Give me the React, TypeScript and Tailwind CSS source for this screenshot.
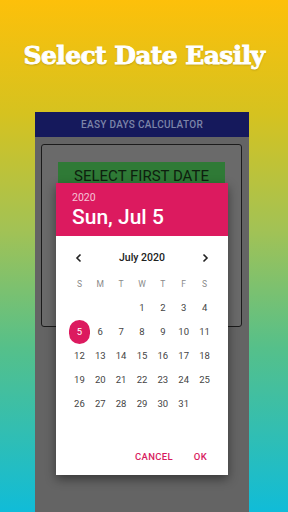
import React from "react"

const weekdays = ["S", "M", "T", "W", "T", "F", "S"]

// July 2020 starts on a Wednesday
const days: (number | null)[] = [null, null, null, ...Array.from({length: 31}, (_, i) => i + 1)]

function Chevron({dir}: {dir: "left" | "right"}) {
    return (
        <svg width="10" height="10" viewBox="0 0 10 10" className="text-[#222]">
            <path
                d={dir === "left" ? "M6.5 1.5 L3 5 L6.5 8.5" : "M3.5 1.5 L7 5 L3.5 8.5"}
                fill="none"
                stroke="currentColor"
                strokeWidth="1.6"
            />
        </svg>
    )
}

function DatePicker() {
    return (
        <div className="absolute left-[56px] top-[183px] w-[172px] h-[292px] bg-white flex flex-col shadow-[0_4px_10px_rgba(0,0,0,0.45)] font-['Roboto',sans-serif]">
            <div className="h-[53px] bg-[#dc1a5f] pl-[16px] pt-[9px]">
                <div className="text-[10.5px] leading-[12px] text-white/75">2020</div>
                <div className="text-[21px] leading-[26px] font-medium text-white">Sun, Jul 5</div>
            </div>
            <div className="mt-[12px] h-[20px] flex items-center justify-between px-[18px]">
                <Chevron dir="left"/>
                <span className="text-[10.5px] font-medium text-[#222]">July 2020</span>
                <Chevron dir="right"/>
            </div>
            <div className="mt-[4px] mx-[13px] grid grid-cols-7">
                {weekdays.map((d, i) => (
                    <div key={i} className="h-[24px] flex items-center justify-center text-[8.5px] text-[#8a8a8a]">{d}</div>
                ))}
                {days.map((d, i) => (
                    <div key={i} className="h-[24px] flex items-center justify-center">
                        {d === 5 ? (
                            <span className="w-[24px] h-[24px] rounded-full bg-[#dc1a5f] text-white flex items-center justify-center text-[9.5px]">5</span>
                        ) : (
                            <span className="text-[9.5px] text-[#444]">{d ?? ""}</span>
                        )}
                    </div>
                ))}
            </div>
            <div className="mt-auto mb-[6px] h-[24px] flex items-center justify-end gap-[21px] pr-[21px] text-[9.5px] font-medium text-[#d81b60] tracking-[0.3px]">
                <span>CANCEL</span>
                <span>OK</span>
            </div>
        </div>
    )
}

export default function App() {
    return (
        <div className="relative w-[288px] h-[512px] overflow-hidden bg-[linear-gradient(180deg,#fdc00a_0%,#d6c21f_22%,#a2c255_45%,#55c08a_68%,#10bcd8_100%)]">
            <h1 className="pt-[40px] h-[112px] text-center text-white font-bold text-[25px] leading-[32px] font-['DejaVu_Serif',serif] tracking-[-0.6px] [-webkit-text-stroke:0.9px_white] [text-shadow:0_1px_2px_rgba(0,0,0,0.25)]">
                Select Date Easily
            </h1>
            <div className="ml-[35px] w-[214px] h-[400px] bg-[#646464] font-['Roboto',sans-serif]">
                <div className="h-[25px] bg-[#15195c] flex items-center justify-center text-[10px] font-medium text-[#7c84a8] tracking-[0.3px]">
                    EASY DAYS CALCULATOR
                </div>
                <div className="mt-[7px] ml-[6px] w-[201px] h-[183px] border border-[#1b1b1b] rounded-[3px] bg-[#6a6a6a] pt-[17px] px-[16px]">
                    <div className="h-[28px] bg-[#2f7a36] flex items-center justify-center text-[15px] text-[#0e200e]">
                        SELECT FIRST DATE
                    </div>
                </div>
            </div>
            <DatePicker/>
        </div>
    )
}
